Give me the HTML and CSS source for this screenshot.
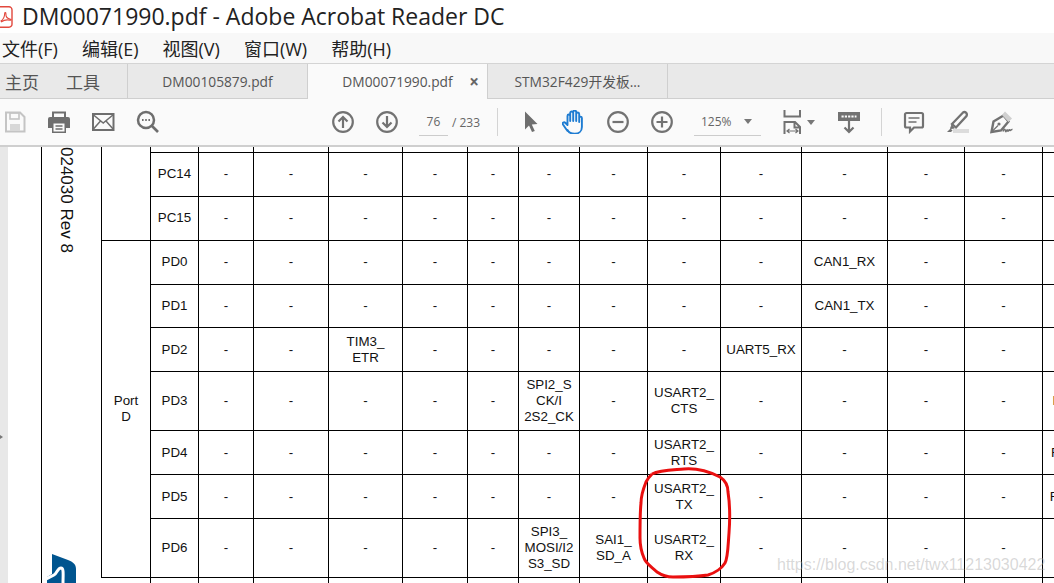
FILE: index.html
```html
<!DOCTYPE html>
<html lang="zh">
<head>
<meta charset="utf-8">
<title>DM00071990.pdf - Adobe Acrobat Reader DC</title>
<link rel="stylesheet" href="styles.css">
</head>
<body>
<div class="window">
  <header class="titlebar">
    <svg class="app-icon" viewBox="0 0 13 22" width="13" height="22"><path d="M-3 .8h12a3 3 0 0 1 3 3v14.400a3 3 0 0 1-3 3H-3z" fill="#fff" stroke="#e2483d" stroke-width="1.400"/><path d="M1 15c2.500-1.500 3.500-4 3.700-7.500.1-1.500 1.300-1.300 1.200.3-.2 3 1.500 5 4.600 5.400 1 .2.800 1.300-.4 1-3-.6-6.500 0-8.600 1.500z" fill="none" stroke="#e2483d" stroke-width="1.100"/></svg>
    <span class="title">DM00071990.pdf - Adobe Acrobat Reader DC</span>
  </header>
  <nav class="menubar">
    <span>文件(F)</span><span>编辑(E)</span><span>视图(V)</span><span>窗口(W)</span><span>帮助(H)</span>
  </nav>
  <div class="tabbar">
    <div class="home-tabs"><span>主页</span><span>工具</span></div>
    <div class="tab">DM00105879.pdf</div>
    <div class="tab active">DM00071990.pdf<span class="close">×</span></div>
    <div class="tab">STM32F429开发板...</div>
  </div>
  <div class="toolbar">
    <svg class="ico faint" viewBox="0 0 24 24"><path d="M3 2.500h14l4.500 4.500v14.500H3z" fill="none" stroke="#c4c4c4" stroke-width="2"/><rect x="7" y="3" width="9" height="6" fill="none" stroke="#c4c4c4" stroke-width="1.600"/><rect x="7" y="14" width="10" height="7" fill="#d8d8d8"/></svg>
    <svg class="ico" viewBox="0 0 24 24"><path d="M6 8V2.500h12V8" fill="none" stroke="#6e6e6e" stroke-width="2"/><path d="M3 7h18a2 2 0 0 1 2 2v9h-4v5H5v-5H1V9a2 2 0 0 1 2-2z" fill="#6e6e6e"/><rect x="6.500" y="13.500" width="11" height="8" fill="#fafafa"/><path d="M8.500 16h7M8.500 19h7" stroke="#6e6e6e" stroke-width="1.300"/></svg>
    <svg class="ico" viewBox="0 0 24 24"><rect x="2" y="4" width="20.500" height="16" fill="none" stroke="#6e6e6e" stroke-width="2"/><path d="M2 4.500l10.200 8.500L22.500 4.500M2 19.500l7.500-8.500M22.500 19.500L15 11" fill="none" stroke="#6e6e6e" stroke-width="1.500"/></svg>
    <svg class="ico" viewBox="0 0 24 24"><circle cx="11" cy="10" r="8" fill="none" stroke="#6e6e6e" stroke-width="2.500"/><path d="M17 16l6 6" stroke="#6e6e6e" stroke-width="2.600"/><path d="M7 10h1.600M10.200 10h1.600M13.400 10H15" stroke="#6e6e6e" stroke-width="1.800"/></svg>

    <svg class="ico gap-nav" viewBox="0 0 24 24"><circle cx="12" cy="12" r="9.800" fill="none" stroke="#727272" stroke-width="2.200"/><path d="M12 18V7M7.500 11.500L12 7l4.500 4.500" fill="none" stroke="#727272" stroke-width="2.200"/></svg>
    <svg class="ico" viewBox="0 0 24 24"><circle cx="12" cy="12" r="9.800" fill="none" stroke="#727272" stroke-width="2.200"/><path d="M12 6v11M7.500 12.500L12 17l4.500-4.500" fill="none" stroke="#727272" stroke-width="2.200"/></svg>
    <div class="pager"><span class="page-box">76</span><span class="page-total">/ 233</span></div>
    <div class="sep"></div>

    <svg class="ico" viewBox="0 0 24 24"><path d="M7 1.500v18l4-4 3 6.500 2.800-1-3-6.500 5.700-.5z" fill="#6e6e6e"/></svg>
    <svg class="ico" viewBox="0 0 24 24"><path d="M5.500 21c-1.500-2-3.500-5-4.500-6.500-1-1.800 1-3 2.500-1.500l2 2V6c0-2 2.500-2 2.700 0v5-8c0-2 2.800-2 3 0v8-9c0-2 2.800-2 3 0v9-7c0-2 2.800-2 3 0v8-4c0-1.800 2.600-1.800 2.700 0v9c0 4-3 6.800-7.200 6.800-3.300 0-5.700-.8-7.200-3.800z" fill="none" stroke="#1e7cd2" stroke-width="1.900" stroke-linejoin="round"/></svg>
    <svg class="ico" viewBox="0 0 24 24"><circle cx="12" cy="12" r="9.800" fill="none" stroke="#727272" stroke-width="2.200"/><path d="M6.500 12h11" stroke="#727272" stroke-width="2.200"/></svg>
    <svg class="ico" viewBox="0 0 24 24"><circle cx="12" cy="12" r="9.800" fill="none" stroke="#727272" stroke-width="2.200"/><path d="M6.500 12h11M12 6.500v11" stroke="#727272" stroke-width="2.200"/></svg>
    <div class="zoom-box"><span>125%</span><i class="caret"></i></div>
    <svg class="ico fit" viewBox="0 0 24 24"><path d="M3.500 0v6.500h15.500V0" fill="none" stroke="#727272" stroke-width="2"/><path d="M3.500 24V12h10.500l5 5v7M13.500 12v5.500H19" fill="none" stroke="#727272" stroke-width="2"/><path d="M6.500 21h10M8.500 19l-2.500 2 2.500 2M14.500 19l2.500 2-2.500 2" fill="none" stroke="#727272" stroke-width="1.200"/></svg>
    <i class="caret fit-caret"></i>
    <svg class="ico dl" viewBox="0 0 24 24"><rect x="1" y="2" width="22" height="9" fill="#727272"/><path d="M4.500 6.500h15" stroke="#fafafa" stroke-width="2.200" stroke-dasharray="2.200 1.100"/><path d="M12 11v11M7.500 17.500L12 22l4.500-4.500" fill="none" stroke="#727272" stroke-width="2.200"/></svg>
    <div class="sep sep-tools"></div>
    <svg class="ico" viewBox="0 0 24 24"><path d="M4.500 3h15a1.500 1.500 0 0 1 1.500 1.500v11.500a1.500 1.500 0 0 1-1.500 1.500H12l-4 4v-4H4.500A1.500 1.500 0 0 1 3 16V4.500A1.500 1.500 0 0 1 4.500 3z" fill="none" stroke="#727272" stroke-width="2.200"/><path d="M6.500 8h11M6.500 12h8" stroke="#727272" stroke-width="1.500"/></svg>
    <svg class="ico" viewBox="0 0 24 24"><path d="M6 14L17 2.500c2-1.500 4.800.8 3.500 3.500L10 17.500z" fill="none" stroke="#727272" stroke-width="2.300"/><path d="M6 14.500l-1.500 4 4-.5" fill="#727272" stroke="#727272"/><path d="M1 22l3.500-3.500 2 2L5 22z" fill="#727272"/><rect x="7" y="19" width="16" height="4" fill="#dcdcdc"/></svg>
    <svg class="ico" viewBox="0 0 24 24"><path d="M1.500 22l2-10.500 10-6 5 6L11 20.500z" fill="none" stroke="#727272" stroke-width="2.400"/><path d="M2 21.500l6-6" stroke="#727272" stroke-width="1.300"/><circle cx="9" cy="14" r="1.600" fill="#727272"/><path d="M12 5l3-3.500 7 7-3.500 3.500z" fill="#d0d0d0"/><path d="M13 21.500c1-3 2-3 2.500-.5s1.500-3 2-.5 1.500-2 2-.5 1.500-1 3-.5" fill="none" stroke="#727272" stroke-width="1.500"/></svg>
  </div>
  <main class="viewer">
    <div class="gutter"></div>
    <div class="rail">
      <span class="doc-rev">024030 Rev 8</span>
      <svg class="logo" viewBox="0 0 30 29" width="30" height="29"><path d="M5 0l16 6c5 2 8 4 8 9v14H0v-6l5-3z" fill="#00558f"/><path d="M-1 25l8-4c3-1.500 3.500-7 7-7 3 0 2 7 2 15" fill="none" stroke="#fff" stroke-width="3"/></svg>
    </div>
    <table class="sheet">
      <colgroup>
        <col class="c49"><col class="c48"><col class="c55"><col class="c75"><col class="c74"><col class="c65"><col class="c51"><col class="c61"><col class="c68"><col class="c73"><col class="c81"><col class="c86"><col class="c77"><col class="c78"><col class="c82">
      </colgroup>
      <tbody>
        <tr class="h6"><td class="port" rowspan="3"></td><td></td><td></td><td></td><td></td><td></td><td></td><td></td><td></td><td></td><td></td><td></td><td></td><td></td><td></td></tr>
        <tr class="h44 lift"><td>PC14</td><td>-</td><td>-</td><td>-</td><td>-</td><td>-</td><td>-</td><td>-</td><td>-</td><td>-</td><td>-</td><td>-</td><td>-</td><td></td></tr>
        <tr class="h44 lift"><td>PC15</td><td>-</td><td>-</td><td>-</td><td>-</td><td>-</td><td>-</td><td>-</td><td>-</td><td>-</td><td>-</td><td>-</td><td>-</td><td></td></tr>
        <tr class="h44 lift"><td class="port" rowspan="7">Port<br>D</td><td>PD0</td><td>-</td><td>-</td><td>-</td><td>-</td><td>-</td><td>-</td><td>-</td><td>-</td><td>-</td><td>CAN1_RX</td><td>-</td><td>-</td><td></td></tr>
        <tr class="h43"><td>PD1</td><td>-</td><td>-</td><td>-</td><td>-</td><td>-</td><td>-</td><td>-</td><td>-</td><td>-</td><td>CAN1_TX</td><td>-</td><td>-</td><td></td></tr>
        <tr class="h44"><td>PD2</td><td>-</td><td>-</td><td>TIM3_<br>ETR</td><td>-</td><td>-</td><td>-</td><td>-</td><td>-</td><td>UART5_RX</td><td>-</td><td>-</td><td>-</td><td></td></tr>
        <tr class="h59"><td>PD3</td><td>-</td><td>-</td><td>-</td><td>-</td><td>-</td><td>SPI2_S<br>CK/I<br>2S2_CK</td><td>-</td><td>USART2_<br>CTS</td><td>-</td><td>-</td><td>-</td><td>-</td><td>FMC_CLK</td></tr>
        <tr class="h44"><td>PD4</td><td>-</td><td>-</td><td>-</td><td>-</td><td>-</td><td>-</td><td>-</td><td>USART2_<br>RTS</td><td>-</td><td>-</td><td>-</td><td>-</td><td>FMC_NOE</td></tr>
        <tr class="h44"><td>PD5</td><td>-</td><td>-</td><td>-</td><td>-</td><td>-</td><td>-</td><td>-</td><td>USART2_<br>TX</td><td>-</td><td>-</td><td>-</td><td>-</td><td>FMC_NWE</td></tr>
        <tr class="h59"><td>PD6</td><td>-</td><td>-</td><td>-</td><td>-</td><td>-</td><td>SPI3_<br>MOSI/I2<br>S3_SD</td><td>SAI1_<br>SD_A</td><td>USART2_<br>RX</td><td>-</td><td>-</td><td>-</td><td>-</td><td></td></tr>
        <tr class="h44"><td class="blank"></td><td></td><td></td><td></td><td></td><td></td><td></td><td></td><td></td><td></td><td></td><td></td><td></td><td></td><td></td></tr>
      </tbody>
    </table>
  </main>
  <i class="edge-mark"></i>
  <svg class="ink" viewBox="0 0 1054 583" width="1054" height="583"><path d="M652 474C660 470 673 470 684 469C696 468 708 471 720 477C726 481 728 486 728 492C730 505 730 520 729 533C728 545 728 558 725 563C722 568 715 573 708 575C695 577 685 577 673 577C667 577 660 574 657 572C652 567 646 564 644 558C641 551 640 545 640 538C640 525 640 512 641 503C641 495 644 487 646 482C648 478 650 476 652 474" fill="none" stroke="#ea1010" stroke-width="3"/></svg>
  <span class="watermark">https://blog.csdn.net/twx11213030422</span>
</div>
</body>
</html>
```

FILE: styles.css
```css
* { box-sizing: border-box; }
html, body { margin: 0; height: 100%; background: #fff; }
.window {
  position: relative;
  width: 1054px;
  height: 583px;
  overflow: hidden;
  display: flex;
  flex-direction: column;
  font-family: "Open Sans", "Noto Sans CJK SC", sans-serif;
  color: #333;
}
.titlebar { height: 33px; flex: none; display: flex; align-items: center; gap: 9px; background: #fff; }
.app-icon { flex: none; }
.title { font-size: 23px; line-height: 33px; color: #222; white-space: nowrap; }
.menubar { height: 30px; flex: none; display: flex; align-items: center; gap: 24px; padding-left: 2px; background: #f8f8f8; font-size: 18px; color: #222; white-space: nowrap; }
.tabbar { height: 36px; flex: none; display: flex; background: #e9e9e9; border-top: 1px solid #d4d4d4; border-bottom: 1px solid #cfcfcf; font-size: 13.750px; color: #555; }
.home-tabs { width: 128px; display: flex; align-items: center; gap: 27px; padding-left: 5px; border-right: 1px solid #cfcfcf; font-size: 17px; color: #555; }
.tab { width: 180px; display: flex; align-items: center; justify-content: center; position: relative; border-right: 1px solid #cfcfcf; white-space: nowrap; }
.tab.active { background: #fafafa; height: 35px; }
.close { position: absolute; right: 8px; top: 6px; font-size: 17px; font-weight: 700; color: #666; }
.toolbar { height: 48px; flex: none; display: flex; align-items: center; gap: 20px; padding-left: 3px; background: #fafafa; border-bottom: 2px solid #cfcfcf; }
.ico { width: 24px; height: 24px; flex: none; }
.gap-nav { margin-left: 152px; }
.pager { width: 61px; display: flex; align-items: center; font-size: 12px; color: #666; }
.page-box { width: 29px; height: 28px; line-height: 27px; text-align: center; border-bottom: 1px solid #ccc; margin-right: 4px; }
.page-total { white-space: nowrap; }
.sep { width: 1px; height: 28px; background: #d4d4d4; margin-left: -3px; }
.zoom-box { width: 67px; height: 28px; display: flex; align-items: center; justify-content: space-between; padding: 0 9px 0 7px; border-bottom: 1px solid #ccc; font-size: 12px; color: #666; }
.caret { display: block; width: 0; height: 0; border-left: 4px solid transparent; border-right: 4px solid transparent; border-top: 5px solid #777; flex: none; }
.fit-caret { margin-left: -18px; }
.dl { margin-left: 2px; }
.sep-tools { margin-left: 0; }
.viewer { flex: 1; min-height: 0; display: flex; overflow: hidden; background: #fff; }
.gutter { width: 8px; flex: none; background: #e8e8e8; margin-right: 33px; }
.rail { width: 61px; flex: none; display: flex; flex-direction: column; justify-content: space-between; align-items: flex-start; border-left: 1px solid #000; overflow: hidden; }
.doc-rev { writing-mode: vertical-rl; font-family: "Liberation Sans", Arial, sans-serif; font-size: 17px; line-height: 20px; color: #111; margin-left: 14px; white-space: nowrap; }
.logo { margin-left: 5px; flex: none; }
.sheet { flex: none; width: 1023px; table-layout: fixed; border-collapse: separate; border-spacing: 0; font-family: "Liberation Sans", Arial, sans-serif; font-size: 13.330px; line-height: 16px; color: #111; align-self: flex-start; }
.sheet td { padding: 0; text-align: center; vertical-align: middle; border-right: 1px solid #000; border-bottom: 1px solid #000; white-space: nowrap; overflow: hidden; }
.sheet .port { box-shadow: -1px 0 0 #000; }
.sheet .lift td:not(.port) { padding-bottom: 2px; }
.sheet tr:last-child td { border-bottom: 0; }
.c49 { width: 49px; } .c48 { width: 48px; } .c55 { width: 55px; } .c75 { width: 75px; } .c74 { width: 74px; } .c65 { width: 65px; } .c51 { width: 51px; } .c61 { width: 61px; } .c68 { width: 68px; } .c73 { width: 73px; } .c81 { width: 81px; } .c86 { width: 86px; } .c77 { width: 77px; } .c78 { width: 78px; } .c82 { width: 82px; }
.h6 { height: 6px; } .h6 td { line-height: 0; }
.h43 { height: 43px; } .h44 { height: 44px; } .h59 { height: 59px; }
.edge-mark { position: absolute; left: 0; top: 435px; width: 0; height: 0; border-top: 2px solid transparent; border-bottom: 2px solid transparent; border-left: 3px solid #777; }
.ink { position: absolute; left: 0; top: 0; pointer-events: none; }
.watermark { position: absolute; left: 777px; top: 555px; font-family: "Liberation Sans", Arial, sans-serif; font-size: 16px; line-height: 20px; color: rgba(170,170,170,.45); white-space: nowrap; }
```
